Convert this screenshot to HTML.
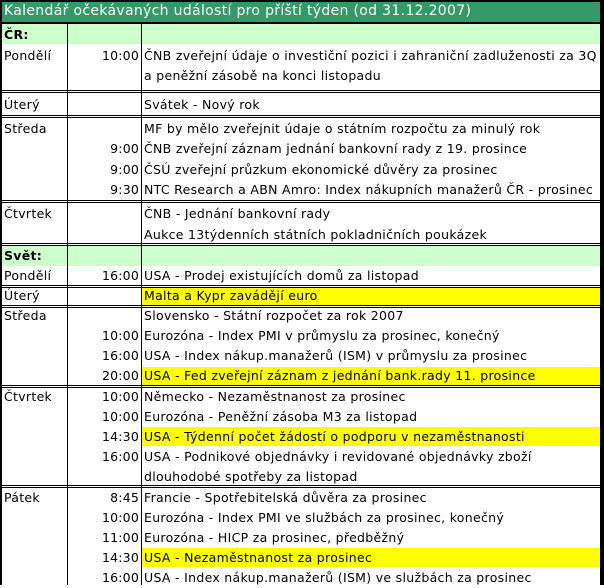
<!DOCTYPE html>
<html><head><meta charset="utf-8"><style>
body{margin:0;width:604px;height:585px;overflow:hidden;background:#fff;position:relative;font-family:"DejaVu Sans","Liberation Sans",sans-serif;font-size:12.5px;letter-spacing:0.3px;color:#000}
div{position:absolute}
.t{height:20px;line-height:19px;white-space:nowrap}
.d{left:4px}
.h{left:68px;width:71px;text-align:right;letter-spacing:0.2px}
.x{left:144px}
.y{left:142px;width:458px;background:#ffff00}
.sep{left:0;width:604px;height:1px;background:#000}
.vl{width:1px;background:#000;top:24px;height:561px}
.bar{left:2px;width:598px;height:20px;background:#ccffcc}
</style></head><body>
<div style="left:0;top:0;width:604px;height:585px;background:#000"></div>
<div style="left:2px;top:2px;width:598px;height:583px;background:#fff"></div>
<div style="left:2px;top:2px;width:598px;height:20px;background:#339966"></div>
<div style="left:2px;top:22px;width:598px;height:2px;background:#000"></div>
<div class="t" style="left:4px;top:2px;color:#fff;font-size:14px;letter-spacing:0.32px">Kalendář očekávaných událostí pro příští týden (od 31.12.2007)</div>

<div class="bar" style="top:24px"></div>
<div class="bar" style="top:246px"></div>

<div class="y" style="top:287px;height:18px"></div>
<div class="y" style="top:367px;height:19px"></div>
<div class="y" style="top:427px;height:19px"></div>
<div class="y" style="top:548px;height:19px"></div>

<div class="vl" style="left:67px"></div>
<div class="vl" style="left:141px"></div>

<div class="sep" style="top:90px"></div><div class="sep" style="top:92px"></div>
<div class="sep" style="top:115px"></div><div class="sep" style="top:117px"></div>
<div class="sep" style="top:200px"></div><div class="sep" style="top:202px"></div>
<div class="sep" style="top:243px"></div><div class="sep" style="top:245px"></div>
<div class="sep" style="top:285px"></div><div class="sep" style="top:287px"></div>
<div class="sep" style="top:305px"></div><div class="sep" style="top:307px"></div>
<div class="sep" style="top:385px"></div><div class="sep" style="top:387px"></div>
<div class="sep" style="top:485px"></div><div class="sep" style="top:487px"></div>

<div class="t d" style="top:25px;font-weight:bold">ČR:</div>
<div class="t d" style="top:46px">Pondělí</div>
<div class="t h" style="top:46px">10:00</div>
<div class="t x" style="top:46px">ČNB zveřejní údaje o investiční pozici i zahraniční zadluženosti za 3Q</div>
<div class="t x" style="top:66px">a peněžní zásobě na konci listopadu</div>

<div class="t d" style="top:95px">Úterý</div>
<div class="t x" style="top:95px">Svátek - Nový rok</div>

<div class="t d" style="top:119px">Středa</div>
<div class="t x" style="top:119px">MF by mělo zveřejnit údaje o státním rozpočtu za minulý rok</div>
<div class="t h" style="top:139px">9:00</div>
<div class="t x" style="top:139px">ČNB zveřejní záznam jednání bankovní rady z 19. prosince</div>
<div class="t h" style="top:160px">9:00</div>
<div class="t x" style="top:160px">ČSÚ zveřejní průzkum ekonomické důvěry za prosinec</div>
<div class="t h" style="top:180px">9:30</div>
<div class="t x" style="top:180px">NTC Research a ABN Amro: Index nákupních manažerů ČR - prosinec</div>

<div class="t d" style="top:204px">Čtvrtek</div>
<div class="t x" style="top:204px">ČNB - Jednání bankovní rady</div>
<div class="t x" style="top:225px">Aukce 13týdenních státních pokladničních poukázek</div>

<div class="t d" style="top:246px;font-weight:bold">Svět:</div>
<div class="t d" style="top:266px">Pondělí</div>
<div class="t h" style="top:266px">16:00</div>
<div class="t x" style="top:266px">USA - Prodej existujících domů za listopad</div>

<div class="t d" style="top:286px">Úterý</div>
<div class="t x" style="top:286px">Malta a Kypr zavádějí euro</div>

<div class="t d" style="top:306px">Středa</div>
<div class="t x" style="top:306px">Slovensko - Státní rozpočet za rok 2007</div>
<div class="t h" style="top:326px">10:00</div>
<div class="t x" style="top:326px">Eurozóna - Index PMI v průmyslu za prosinec, konečný</div>
<div class="t h" style="top:346px">16:00</div>
<div class="t x" style="top:346px">USA - Index nákup.manažerů (ISM) v průmyslu za prosinec</div>
<div class="t h" style="top:366px">20:00</div>
<div class="t x" style="top:366px">USA - Fed zveřejní záznam z jednání bank.rady 11. prosince</div>

<div class="t d" style="top:387px">Čtvrtek</div>
<div class="t h" style="top:387px">10:00</div>
<div class="t x" style="top:387px">Německo - Nezaměstnanost za prosinec</div>
<div class="t h" style="top:407px">10:00</div>
<div class="t x" style="top:407px">Eurozóna - Peněžní zásoba M3 za listopad</div>
<div class="t h" style="top:427px">14:30</div>
<div class="t x" style="top:427px">USA - Týdenní počet žádostí o podporu v nezaměstnanosti</div>
<div class="t h" style="top:447px">16:00</div>
<div class="t x" style="top:447px">USA - Podnikové objednávky i revidované objednávky zboží</div>
<div class="t x" style="top:467px">dlouhodobé spotřeby za listopad</div>

<div class="t d" style="top:488px">Pátek</div>
<div class="t h" style="top:488px">8:45</div>
<div class="t x" style="top:488px">Francie - Spotřebitelská důvěra za prosinec</div>
<div class="t h" style="top:508px">10:00</div>
<div class="t x" style="top:508px">Eurozóna - Index PMI ve službách za prosinec, konečný</div>
<div class="t h" style="top:528px">11:00</div>
<div class="t x" style="top:528px">Eurozóna - HICP za prosinec, předběžný</div>
<div class="t h" style="top:548px">14:30</div>
<div class="t x" style="top:548px">USA - Nezaměstnanost za prosinec</div>
<div class="t h" style="top:568px">16:00</div>
<div class="t x" style="top:568px">USA - Index nákup.manažerů (ISM) ve službách za prosinec</div>
</body></html>
